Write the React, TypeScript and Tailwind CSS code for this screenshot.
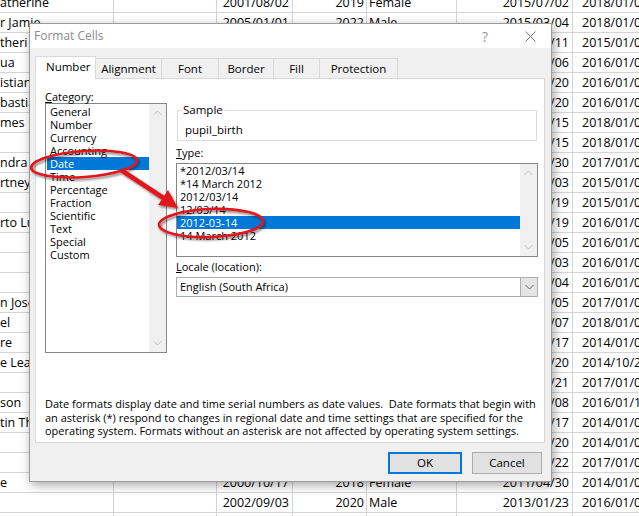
import React from "react";

type Row = [string, string, string, string, string, string];

// name, dob, year, gender, enrolled, next (middle cells hidden behind the dialog are left blank)
const rows: Row[] = [
  ["atherine", "2001/08/02", "2019", "Female", "2015/07/02", "2018/01/01"],
  ["r Jamie", "2005/01/01", "2022", "Male", "2015/03/04", "2018/01/01"],
  ["theri", "", "", "", "2014/06/11", "2015/01/01"],
  ["ua", "", "", "", "2014/09/06", "2016/01/01"],
  ["istian", "", "", "", "2015/01/20", "2016/01/01"],
  ["bastian", "", "", "", "2015/02/20", "2016/01/01"],
  ["mes", "", "", "", "2015/03/15", "2018/01/01"],
  ["", "", "", "", "2015/04/15", "2018/01/01"],
  ["ndra", "", "", "", "2016/05/30", "2017/01/01"],
  ["rtney", "", "", "", "2014/08/03", "2015/01/01"],
  ["", "", "", "", "2014/10/19", "2015/01/01"],
  ["rto Luis", "", "", "", "2015/06/19", "2016/01/01"],
  ["", "", "", "", "2015/07/05", "2016/01/01"],
  ["", "", "", "", "2015/11/03", "2016/01/01"],
  ["", "", "", "", "2015/12/04", "2016/01/01"],
  ["n Jose", "", "", "", "2016/02/05", "2017/01/01"],
  ["el", "", "", "", "2017/03/07", "2018/01/01"],
  ["re", "", "", "", "2013/05/17", "2014/01/01"],
  ["e Lea", "", "", "", "2013/08/20", "2014/10/21"],
  ["", "", "", "", "2016/09/21", "2017/01/01"],
  ["son", "", "", "", "2015/10/08", "2016/01/11"],
  ["tin Thomas", "", "", "", "2013/11/17", "2014/01/01"],
  ["", "", "", "", "2013/12/20", "2014/01/01"],
  ["", "", "", "", "2016/04/22", "2017/01/01"],
  ["e", "2000/10/17", "2018", "Female", "2011/04/30", "2014/01/01"],
  ["", "2002/09/03", "2020", "Male", "2013/01/23", "2016/01/01"],
  ["", "", "", "", "", ""],
];

const categories = [
  "General",
  "Number",
  "Currency",
  "Accounting",
  "Date",
  "Time",
  "Percentage",
  "Fraction",
  "Scientific",
  "Text",
  "Special",
  "Custom",
];

const types = [
  "*2012/03/14",
  "*14 March 2012",
  "2012/03/14",
  "12/03/14",
  "2012-03-14",
  "14 March 2012",
];

const tabs = [
  { label: "Alignment", w: "w-[66px]" },
  { label: "Font", w: "w-[57px]" },
  { label: "Border", w: "w-[55px]" },
  { label: "Fill", w: "w-[46px]" },
  { label: "Protection", w: "w-[78px]" },
];

function Chevron({ up, dark }: { up?: boolean; dark?: boolean }) {
  return (
    <svg width="9" height="6" viewBox="0 0 9 6" className="block">
      <path
        d={up ? "M0.5 5 L4.5 1 L8.5 5" : "M0.5 1 L4.5 5 L8.5 1"}
        fill="none"
        stroke={dark ? "#606060" : "#c2c2c2"}
        strokeWidth="1"
      />
    </svg>
  );
}

function ScrollBar() {
  return (
    <div className="w-[17px] bg-[#f0f0f0] flex flex-col items-center justify-between py-[6px]">
      <Chevron up />
      <Chevron />
    </div>
  );
}

function Sheet() {
  return (
    <div className="-mt-[7px] font-['Open_Sans',sans-serif] text-[12.5px] text-black">
      {rows.map((r, i) => (
        <div key={i} className="flex h-[20px] border-b border-[#d4d4d4] leading-[19px] whitespace-nowrap">
          <div className="w-[114px] border-r border-[#d4d4d4] overflow-hidden">{r[0]}</div>
          <div className="w-[103px] border-r border-[#d4d4d4]" />
          <div className="w-[76px] border-r border-[#d4d4d4] text-right pr-[3px]">{r[1]}</div>
          <div className="w-[74px] border-r border-[#d4d4d4] text-right pr-[2px]">{r[2]}</div>
          <div className="w-[90px] border-r border-[#d4d4d4] pl-[2px]">{r[3]}</div>
          <div className="w-[116px] border-r border-[#d4d4d4] text-right pr-[3px]">{r[4]}</div>
          <div className="flex-1 pl-[9px] overflow-hidden">{r[5]}</div>
        </div>
      ))}
    </div>
  );
}

function Annotations() {
  return (
    <svg className="absolute inset-0 pointer-events-none" width="639" height="516" viewBox="0 0 639 516">
      <defs>
        <filter id="sh" x="-20%" y="-40%" width="140%" height="180%">
          <feDropShadow dx="1.5" dy="2" stdDeviation="1.2" floodColor="#000" floodOpacity="0.45" />
        </filter>
      </defs>
      <g filter="url(#sh)" fill="none" stroke="#e3161b" strokeWidth="2.6">
        <ellipse cx="84" cy="164" rx="53" ry="13" transform="rotate(-4 84 164)" />
        <ellipse cx="211" cy="223" rx="52" ry="14" transform="rotate(-2 211 223)" />
        <line x1="121" y1="170" x2="165" y2="199" strokeWidth="4.5" />
        <polygon points="178,208 158,205 168,190" fill="#e3161b" stroke="none" />
      </g>
    </svg>
  );
}

function Dialog() {
  return (
    <div className="absolute left-[29px] top-[23px] w-[523px] h-[459px] flex flex-col border border-[#9a9a9a] bg-[#f0f0f0] shadow-[2px_3px_10px_rgba(0,0,0,0.35)] font-['Open_Sans',sans-serif] text-[11px] text-black">
      <div className="h-[24px] bg-white flex items-center pl-[4px] pr-[15px]">
        <span className="text-[12px] text-[#8a8a8a] flex-1">Format Cells</span>
        <span className="text-[14px] text-[#9a9a9a] mr-[37px]">?</span>
        <svg width="11" height="11" viewBox="0 0 11 11">
          <path d="M0.5 0.5 L10.5 10.5 M10.5 0.5 L0.5 10.5" stroke="#777" strokeWidth="1" />
        </svg>
      </div>

      <div className="flex-1 pt-[8px] pl-[5px] pr-[6px]">
        <div className="flex h-[22px] items-end">
          <div className="relative z-10 w-[61px] h-[23px] -mb-[1px] bg-white border border-b-0 border-[#d9d9d9] pl-[10px] leading-[20px] text-[11.5px]">
            Number
          </div>
          {tabs.map((t) => (
            <div key={t.label} className={`${t.w} h-[20px] border-t border-r border-[#d9d9d9] bg-[#f0f0f0] text-center leading-[19px] text-[11.5px]`}>
              {t.label}
            </div>
          ))}
        </div>

        <div className="w-[510px] h-[365px] bg-white border border-[#d9d9d9] pl-[9px] pt-[12px]">
          <div className="flex">
            <div className="w-[122px]">
              <div className="h-[12px] leading-[12px]">
                <span className="underline">C</span>ategory:
              </div>
              <div className="h-[250px] border border-[#828790] flex">
                <div className="flex-1 pt-[1px] pl-[1px]">
                  {categories.map((c) => (
                    <div
                      key={c}
                      className={`h-[13px] leading-[13px] pl-[3px] ${c === "Date" ? "bg-[#0078d7] text-white" : ""}`}
                    >
                      {c}
                    </div>
                  ))}
                </div>
                <ScrollBar />
              </div>
            </div>

            <div className="ml-[9px] w-[362px]">
              <div className="relative mt-[19px] ml-[1px] w-[360px] h-[31px] border border-[#dcdcdc]">
                <span className="absolute -top-[8px] left-[4px] bg-white px-[1px] leading-[14px] text-[11.5px]">Sample</span>
                <div className="pl-[7px] pt-[12px] leading-[14px] text-[11.5px]">pupil_birth</div>
              </div>
              <div className="mt-[6px] h-[12px] leading-[12px]">
                <span className="underline">T</span>ype:
              </div>
              <div className="mt-[4px] h-[94px] border border-[#828790] flex">
                <div className="flex-1">
                  {types.map((t, i) => (
                    <div
                      key={t}
                      className={`h-[13px] leading-[13px] pl-[3px] ${i === 4 ? "bg-[#0078d7] text-white" : ""}`}
                    >
                      {t}
                    </div>
                  ))}
                </div>
                <ScrollBar />
              </div>
              <div className="mt-[4px] h-[12px] leading-[12px]">
                <span className="underline">L</span>ocale (location):
              </div>
              <div className="mt-[4px] h-[20px] border border-[#adadad] flex">
                <div className="flex-1 pl-[3px] leading-[18px]">English (South Africa)</div>
                <div className="w-[17px] bg-[#e5e5e5] border-l border-[#adadad] flex items-center justify-center">
                  <Chevron dark />
                </div>
              </div>
            </div>
          </div>

          <div className="mt-[44px] leading-[13.5px] whitespace-nowrap">
            <div>Date formats display date and time serial numbers as date values.&nbsp; Date formats that begin with</div>
            <div>an asterisk (*) respond to changes in regional date and time settings that are specified for the</div>
            <div>operating system. Formats without an asterisk are not affected by operating system settings.</div>
          </div>
        </div>

        <div className="mt-[9px] flex justify-end gap-[10px] pr-[3px]">
          <button className="w-[74px] h-[22px] bg-[#e1e1e1] border-2 border-[#0078d7] leading-[18px] text-[11.5px]">OK</button>
          <button className="w-[70px] h-[22px] bg-[#e1e1e1] border border-[#adadad] leading-[20px] text-[11.5px]">Cancel</button>
        </div>
      </div>
    </div>
  );
}

export default function App() {
  return (
    <div className="relative w-[639px] h-[516px] overflow-hidden bg-white">
      <Sheet />
      <Dialog />
      <Annotations />
    </div>
  );
}
